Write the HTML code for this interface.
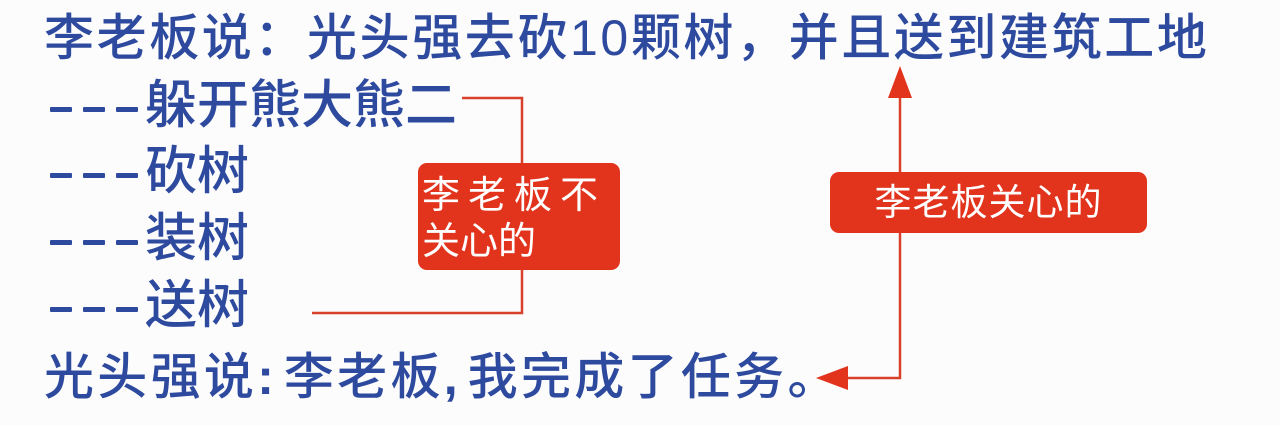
<!DOCTYPE html>
<html><head><meta charset="utf-8"><style>
html,body{margin:0;padding:0;background:#fcfcfd;width:1280px;height:425px;overflow:hidden;position:relative}
.t{position:absolute;left:44px;color:#2d4a9e;font-family:"Liberation Sans","Noto Sans CJK SC",sans-serif;font-size:50px;line-height:60px;white-space:nowrap;font-weight:500}
.i{left:145px;font-size:52px}
.dash{position:absolute;width:22px;height:5px;background:#2d4a9e;border-radius:1px}
.box{position:absolute;background:#e2331c;border-radius:9px;color:#fff;font-family:"Liberation Sans","Noto Sans CJK SC",sans-serif}
</style></head><body>
<div class="t" style="top:8px;letter-spacing:2.6px">李老板说：光头强去砍10颗树，并且送到建筑工地</div>
<div class="t i" style="top:76px">躲开熊大熊二</div>
<div class="t i" style="top:142px">砍树</div>
<div class="t i" style="top:209px">装树</div>
<div class="t i" style="top:276px">送树</div>
<div class="t" style="top:347px;letter-spacing:3.3px">光头强说<b style="letter-spacing:10px">:</b>李老板<b style="letter-spacing:10px">,</b>我完成了任务。</div>
<div>
<div class="dash" style="left:50px;top:107px"></div><div class="dash" style="left:83px;top:107px"></div><div class="dash" style="left:116px;top:107px"></div>
<div class="dash" style="left:50px;top:173px"></div><div class="dash" style="left:83px;top:173px"></div><div class="dash" style="left:116px;top:173px"></div>
<div class="dash" style="left:50px;top:240px"></div><div class="dash" style="left:83px;top:240px"></div><div class="dash" style="left:116px;top:240px"></div>
<div class="dash" style="left:50px;top:307px"></div><div class="dash" style="left:83px;top:307px"></div><div class="dash" style="left:116px;top:307px"></div>
</div>
<svg width="1280" height="425" style="position:absolute;left:0;top:0">
<g stroke="#d9402a" stroke-width="2.5" fill="none">
<polyline points="462,98 522,98 522,313 312,313"/>
<polyline points="900,95 900,378 840,378"/>
</g>
<polygon points="900,66 888,98 912,98" fill="#e2331c"/>
<polygon points="816,378 848,366 848,390" fill="#e2331c"/>
</svg>
<div class="box" style="left:418px;top:163px;width:202px;height:107px">
<div style="position:absolute;left:4px;top:10px;font-size:38px;line-height:46px;letter-spacing:8px">李老板不</div>
<div style="position:absolute;left:4px;top:56px;font-size:38px;line-height:46px">关心的</div>
</div>
<div class="box" style="left:830px;top:172px;width:317px;height:61px;font-size:37px;line-height:61px;text-align:center;letter-spacing:1px">李老板关心的</div>
</body></html>
